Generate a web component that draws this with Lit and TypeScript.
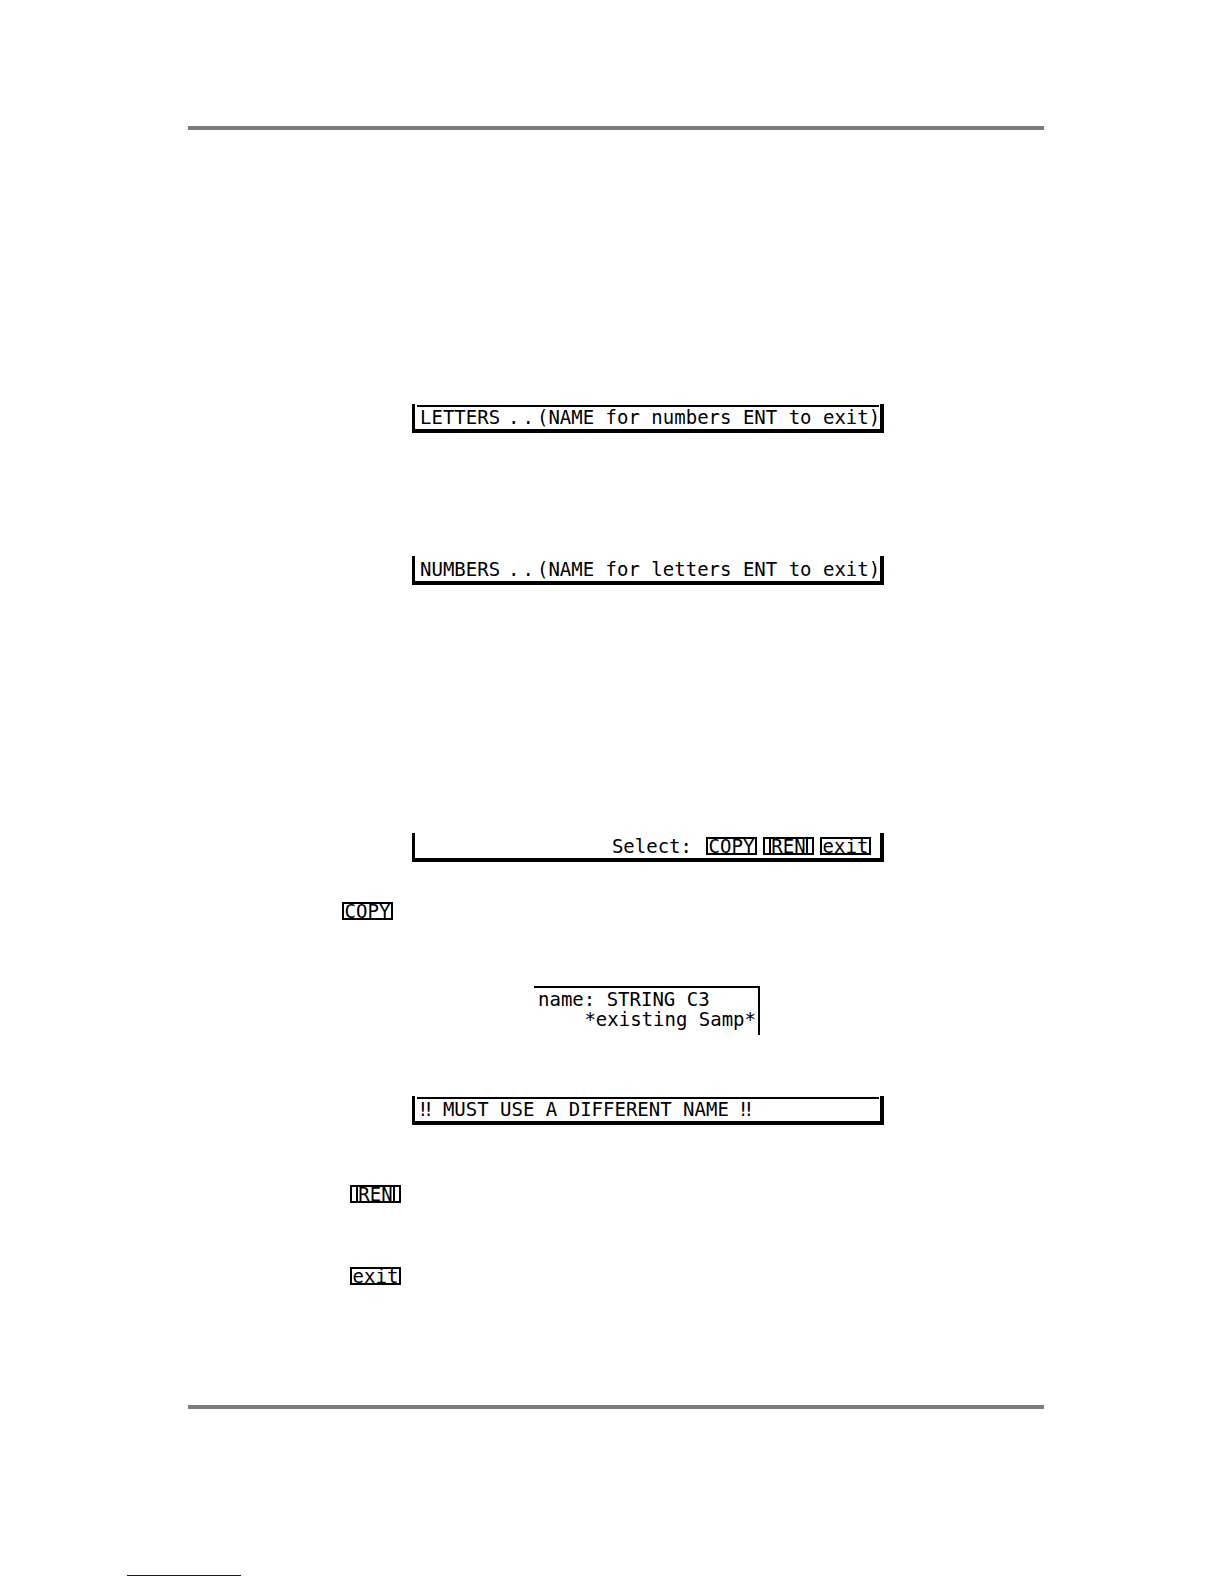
import { LitElement, html, css } from "lit";
import { customElement, property } from "lit/decorators.js";

const lcdText = css`
  .lcd-text {
    font-family: "DejaVu Sans Mono", "Liberation Mono", monospace;
    font-size: 19px;
    line-height: 20px;
    color: #000;
    white-space: nowrap;
  }
`;

/* Soft key as it is drawn along the bottom of the LCD. */
@customElement("soft-key")
export class SoftKey extends LitElement {
  @property() label = "";
  @property({ type: Boolean }) barred = false;

  static styles = [
    lcdText,
    css`
      :host {
        display: block;
      }
      .key {
        display: flex;
        justify-content: center;
        align-items: stretch;
        box-sizing: border-box;
        width: 51px;
        height: 18px;
        margin: 0;
        padding: 0;
        border: 2px solid #000;
        border-radius: 0;
        background: #fff;
        line-height: 14px;
      }
      .barred {
        border-left: 2px solid #000;
        border-right: 2px solid #000;
      }
    `,
  ];

  render() {
    return html`<button class="key lcd-text" type="button">
      <span class=${this.barred ? "barred" : ""}>${this.label}</span>
    </button>`;
  }
}

/* Bottom strip of the LCD: thin left edge, heavy right and bottom edges. */
@customElement("lcd-strip")
export class LcdStrip extends LitElement {
  @property({ type: Boolean }) lined = false;

  static styles = [
    lcdText,
    css`
      :host {
        display: block;
        max-width: 472px;
      }
      .strip {
        box-sizing: border-box;
        height: 29px;
        border: solid #000;
        border-width: 0 4px 4px 3px;
        padding-top: 1px;
      }
      .line {
        height: 2px;
        margin: 0 1px 0 2px;
        background: #000;
      }
      .content {
        display: flex;
        align-items: center;
        padding: 0 0 0 5px;
      }
      .plain {
        padding-top: 2px;
      }
    `,
  ];

  render() {
    return html`<div class="strip lcd-text">
      ${this.lined ? html`<div class="line"></div>` : ""}
      <div class="content ${this.lined ? "" : "plain"}"><slot></slot></div>
    </div>`;
  }
}

@customElement("app-root")
export class AppRoot extends LitElement {
  static styles = [
    lcdText,
    css`
      :host {
        display: block;
        background: #fff;
      }
      .page {
        padding: 126px 180px 166px 188px;
      }
      .rule {
        height: 4px;
        margin: 0;
        border: 0;
        background: #7b7b7b;
      }
      .figures {
        display: flex;
        flex-direction: column;
        padding: 274px 0 120px;
      }
      .strip {
        margin-left: 224px;
      }
      .numbers {
        margin-top: 123px;
      }
      .select {
        margin-top: 248px;
      }
      .warning {
        margin-top: 61px;
      }
      .word {
        padding-right: 8px;
      }
      .dot {
        padding-right: 3px;
      }
      .choices {
        display: flex;
        flex: 1;
        align-items: center;
        justify-content: flex-end;
        gap: 6px;
        padding-right: 9px;
      }
      .prompt {
        padding-right: 8px;
      }
      .copy {
        margin: 40px 0 0 154px;
      }
      .ren {
        margin: 60px 0 0 162px;
      }
      .exit {
        margin: 64px 0 0 162px;
      }
      .name {
        align-self: flex-start;
        box-sizing: border-box;
        width: 226px;
        margin: 66px 0 0 346px;
        padding: 1px 2px 6px 4px;
        border: solid #000;
        border-width: 2px 2px 0 0;
      }
      .name-row {
        display: flex;
      }
      .name-end {
        justify-content: flex-end;
      }
      .link-line {
        width: 114px;
        height: 1px;
        margin: 0 0 8px 127px;
        border: 0;
        background: #0a0a80;
      }
    `,
  ];

  private entry(mode: string, hint: string) {
    return html`<span class="word">${mode}</span><span class="dot">.</span
      ><span class="dot">.</span><span>${hint}</span>`;
  }

  render() {
    return html`
      <main class="page">
        <hr class="rule" />
        <div class="figures">
          <lcd-strip class="strip lcd-text" lined
            >${this.entry("LETTERS", "(NAME for numbers ENT to exit)")}</lcd-strip
          >
          <lcd-strip class="strip numbers lcd-text"
            >${this.entry("NUMBERS", "(NAME for letters ENT to exit)")}</lcd-strip
          >
          <lcd-strip class="strip select lcd-text"
            ><div class="choices"
              ><span class="prompt">Select:</span
              ><soft-key label="COPY"></soft-key
              ><soft-key label="REN" barred></soft-key
              ><soft-key label="exit"></soft-key></div
          ></lcd-strip>
          <soft-key class="copy" label="COPY"></soft-key>
          <div class="name lcd-text"
            ><div class="name-row"><span>name: STRING C3</span></div
            ><div class="name-row name-end"><span>*existing Samp*</span></div
          ></div>
          <lcd-strip class="strip warning lcd-text" lined
            ><span>‼ MUST USE A DIFFERENT NAME ‼</span></lcd-strip
          >
          <soft-key class="ren" label="REN" barred></soft-key>
          <soft-key class="exit" label="exit"></soft-key>
        </div>
        <hr class="rule" />
      </main>
      <hr class="link-line" />
    `;
  }
}
